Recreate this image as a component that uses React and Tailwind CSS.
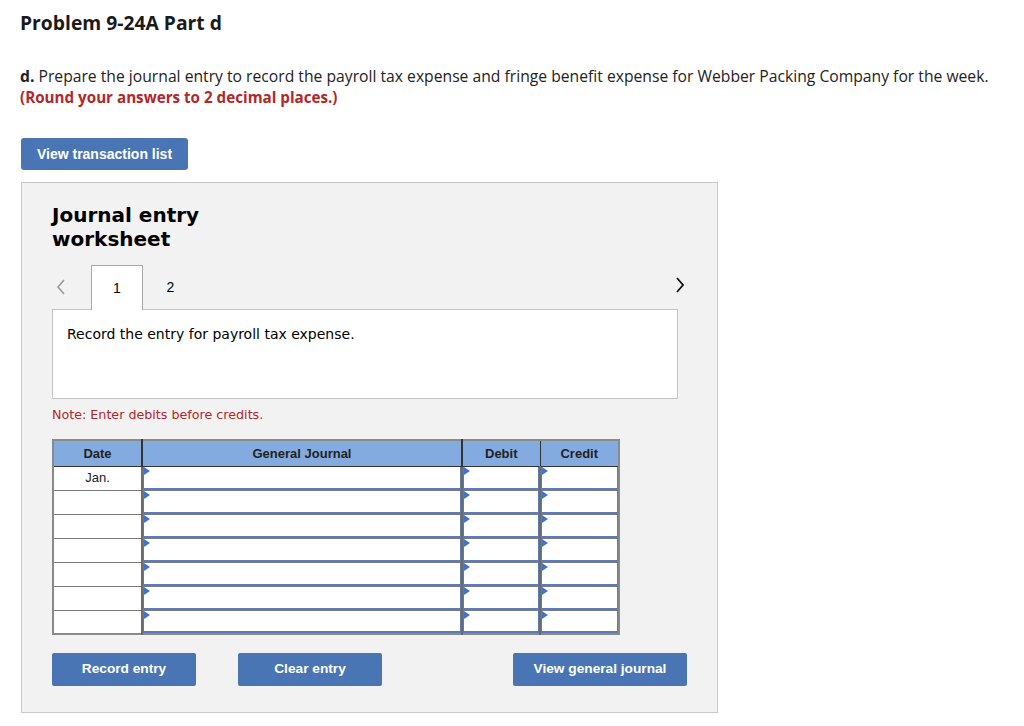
import React from 'react';

const rows = ['Jan.', '', '', '', '', '', ''];

function Flag() {
  return (
    <svg className="absolute left-0 top-0" width="6" height="8" viewBox="0 0 6 8">
      <polygon points="0,0 6,4 0,8" fill="#3f74c7" />
    </svg>
  );
}

function InputCell({ w }) {
  return (
    <td className={`${w} h-[24px] border border-[#7a7a7a] border-l-2 border-l-[#6b6b6b] p-0`}>
      <div className="relative h-full border-x border-b-2 border-[#5a7cb8] bg-white">
        <Flag />
      </div>
    </td>
  );
}

export default function App() {
  return (
    <div className="min-h-[726px] bg-white px-[20px] pt-[11px] pb-[14px] text-[#111]" style={{ fontFamily: '"Open Sans", Lato, sans-serif' }}>
      <h1 className="text-[19.3px] font-bold leading-[24px] text-[#1a1a1a]">Problem 9-24A Part d</h1>
      <div className="mt-[31px] text-[15.7px] leading-[21px] text-[#222]">
        <p>
          <span className="font-bold">d.</span> Prepare the journal entry to record the payroll tax expense and fringe benefit expense for Webber Packing Company for the week.
        </p>
        <p className="text-[15.2px] font-bold text-[#b3262a]">(Round your answers to 2 decimal places.)</p>
      </div>
      <button
        className="mt-[30px] ml-px h-[32px] w-[167px] rounded-[3px] bg-[#4a75b5] text-[14px] font-bold text-white"
        style={{ fontFamily: '"Liberation Sans", Arial, sans-serif' }}
      >
        View transaction list
      </button>
      <div className="mt-[12px] ml-px w-[697px] border border-[#c9c9c9] bg-[#f2f2f2] pl-[30px] pt-[20px] pb-[26px]">
        <h2 className="text-[20px] font-bold leading-[24px] text-black" style={{ fontFamily: '"DejaVu Sans", Verdana, sans-serif' }}>
          Journal entry
          <br />
          worksheet
        </h2>
        <div className="relative mt-[14px] flex w-[625px] items-end" style={{ fontFamily: '"Liberation Sans", Arial, sans-serif' }}>
          <span className="mb-[14px] ml-[4px] w-[35px] text-[20px] leading-none text-[#9a9a9a]">
            <svg width="10" height="16" viewBox="0 0 10 16"><polyline points="8,1 2,8 8,15" fill="none" stroke="#9a9a9a" strokeWidth="1.6" /></svg>
          </span>
          <div className="relative z-10 -mb-px flex h-[45px] w-[52px] items-center justify-center border border-b-0 border-[#a8a8a8] bg-white text-[14px] text-black">
            1
          </div>
          <div className="flex h-[44px] w-[55px] items-center justify-center text-[14px] text-black">2</div>
          <span className="absolute right-[-8px] top-[12px]">
            <svg width="10" height="16" viewBox="0 0 10 16"><polyline points="2,1 8,8 2,15" fill="none" stroke="#111" strokeWidth="1.8" /></svg>
          </span>
        </div>
        <div className="h-[90px] w-[626px] border border-[#c4c4c4] bg-white px-[14px] pt-[14px] text-[14px] text-black" style={{ fontFamily: '"DejaVu Sans", Verdana, sans-serif' }}>
          Record the entry for payroll tax expense.
        </div>
        <p className="mt-[8px] text-[12.7px] leading-[16px] text-[#b3262a]" style={{ fontFamily: '"DejaVu Sans", Verdana, sans-serif' }}>
          Note: Enter debits before credits.
        </p>
        <table className="mt-[16px] border-collapse border-2 border-[#8a8a8a]" style={{ fontFamily: '"Liberation Sans", Arial, sans-serif' }}>
          <thead>
            <tr className="h-[26px] bg-[#84abe0] text-[13px] font-bold text-[#222]">
              <th className="w-[89px] border-b border-r-2 border-[#333] p-0">Date</th>
              <th className="w-[320px] border-b border-r-2 border-[#333] p-0">General Journal</th>
              <th className="w-[78px] border-b border-r border-[#333] p-0">Debit</th>
              <th className="w-[79px] border-b border-[#333] p-0">Credit</th>
            </tr>
          </thead>
          <tbody>
            {rows.map((d, i) => (
              <tr key={i} className="h-[24px]">
                <td className="w-[89px] border border-[#7a7a7a] bg-white p-0 text-center align-top text-[13px] leading-[22px] text-[#222]">{d}</td>
                <InputCell w="w-[320px]" />
                <InputCell w="w-[78px]" />
                <InputCell w="w-[79px]" />
              </tr>
            ))}
          </tbody>
        </table>
        <div className="mt-[17px] flex w-[635px] items-center text-[13.7px] font-bold text-white" style={{ fontFamily: '"Liberation Sans", Arial, sans-serif' }}>
          <button className="h-[33px] w-[144px] rounded-[2px] bg-[#4a75b5]">Record entry</button>
          <button className="ml-[42px] mt-px h-[33px] w-[144px] rounded-[2px] bg-[#4a75b5]">Clear entry</button>
          <button className="ml-auto mt-px h-[33px] w-[174px] rounded-[2px] bg-[#4a75b5]">View general journal</button>
        </div>
      </div>
    </div>
  );
}
